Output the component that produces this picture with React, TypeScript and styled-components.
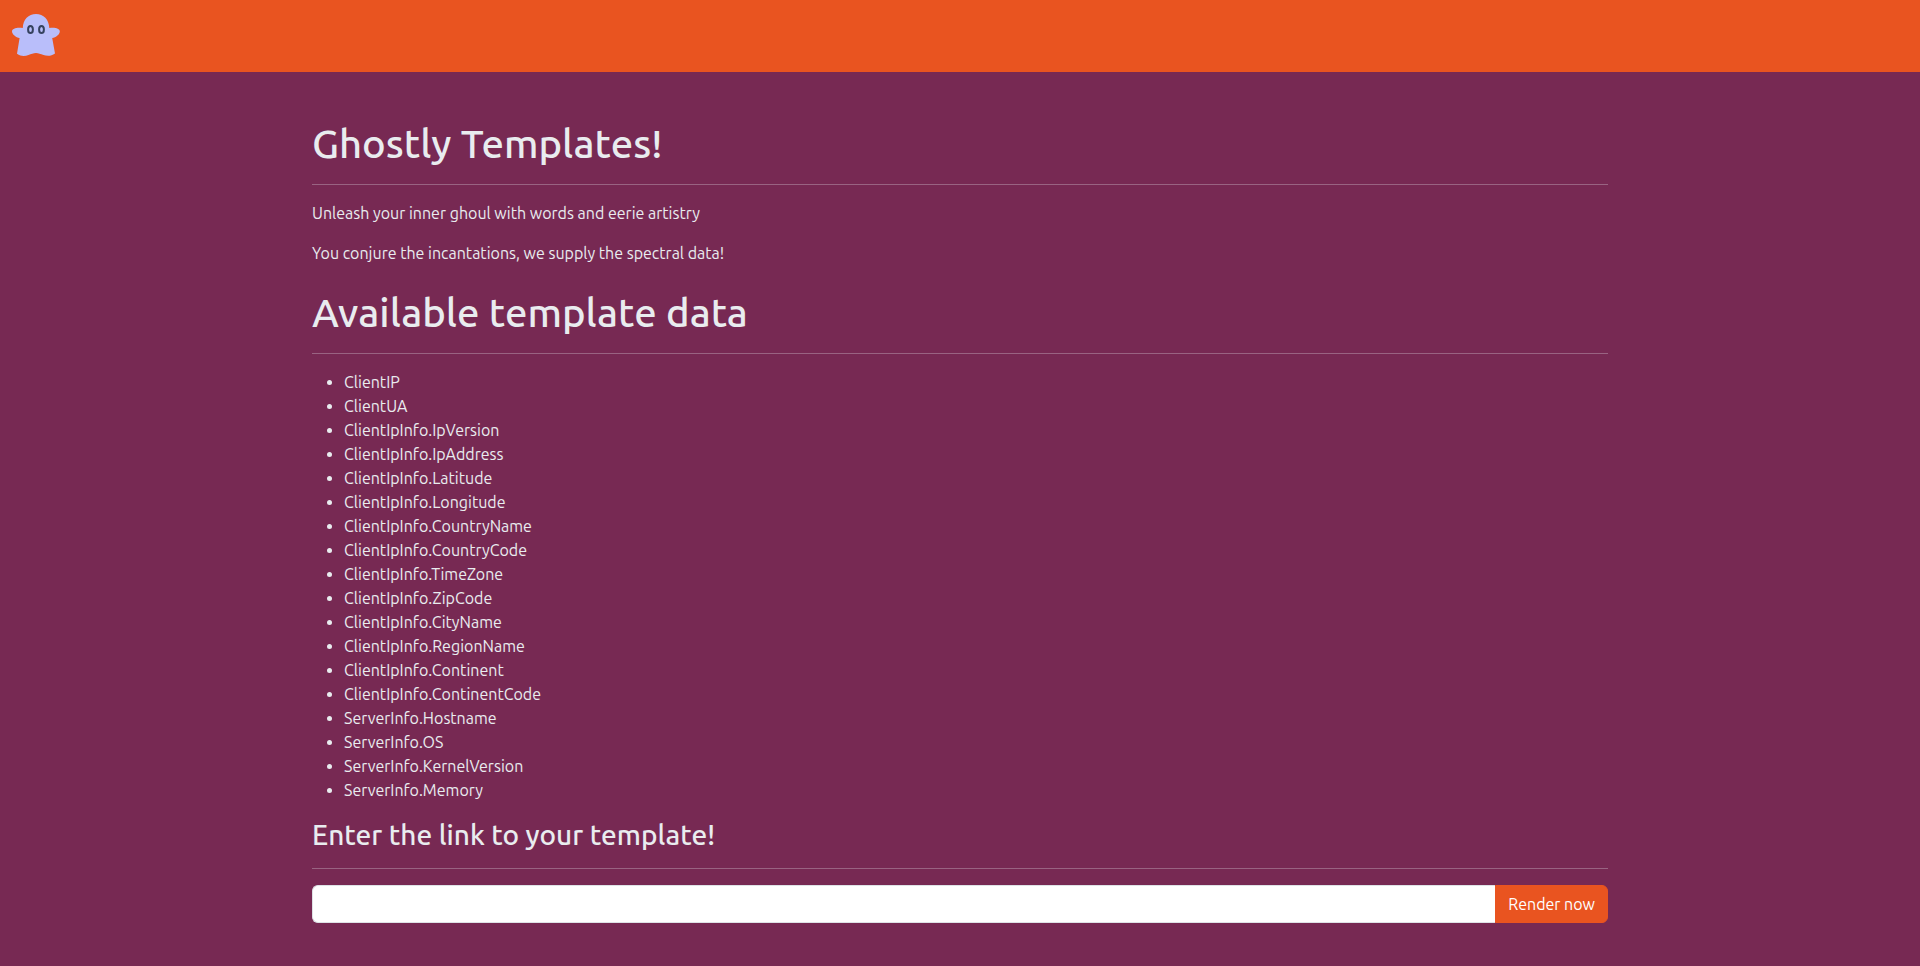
import React from 'react';
import styled, { createGlobalStyle } from 'styled-components';

const GlobalStyle = createGlobalStyle`
  *, *::before, *::after { box-sizing: border-box; }
  body {
    margin: 0;
    background: #772953;
    color: #e9ecef;
    font-family: Ubuntu, 'Noto Sans', sans-serif;
    font-size: 16px;
    font-weight: 400;
    line-height: 24px;
  }
`;

const Navbar = styled.nav`
  display: flex;
  align-items: center;
  padding: 12px;
  background: #e95420;
`;

const Brand = styled.a`
  display: block;
  width: 48px;
  height: 48px;
`;

const Container = styled.main`
  max-width: 1320px;
  margin: 0 auto;
  padding: 48px 12px;
`;

const Title = styled.h1`
  margin: 0;
  font-size: 40px;
  font-weight: 500;
  line-height: 48px;
`;

const DataTitle = styled(Title).attrs({ as: 'h2' })`
  margin-top: 24px;
`;

const FormTitle = styled.h3`
  margin: 0;
  font-size: 28px;
  font-weight: 500;
  line-height: 34px;
`;

const Rule = styled.hr`
  margin: 16px 0;
  border: 0;
  border-top: 1px solid #996382;
`;

const Text = styled.p`
  margin: 0 0 16px;
`;

const FieldList = styled.ul`
  margin: 0 0 16px;
  padding-left: 32px;
`;

const InputGroup = styled.form`
  display: flex;
  height: 38px;
`;

const LinkInput = styled.input`
  flex: 1;
  min-width: 0;
  padding: 6px 12px;
  border: 1px solid #dee2e6;
  border-right: 0;
  border-radius: 6px 0 0 6px;
  background: #fff;
  color: #212529;
  font: inherit;
`;

const RenderButton = styled.button`
  padding: 6px 12px;
  border: 1px solid #e95420;
  border-radius: 0 6px 6px 0;
  background: #e95420;
  color: #fff;
  font: inherit;
  cursor: pointer;
`;

const fields = [
  'ClientIP',
  'ClientUA',
  'ClientIpInfo.IpVersion',
  'ClientIpInfo.IpAddress',
  'ClientIpInfo.Latitude',
  'ClientIpInfo.Longitude',
  'ClientIpInfo.CountryName',
  'ClientIpInfo.CountryCode',
  'ClientIpInfo.TimeZone',
  'ClientIpInfo.ZipCode',
  'ClientIpInfo.CityName',
  'ClientIpInfo.RegionName',
  'ClientIpInfo.Continent',
  'ClientIpInfo.ContinentCode',
  'ServerInfo.Hostname',
  'ServerInfo.OS',
  'ServerInfo.KernelVersion',
  'ServerInfo.Memory',
];

const Ghost = () => (
  <svg width="48" height="48" viewBox="0 0 48 48" aria-hidden="true">
    <path
      fill="#b9befa"
      d="M10.800 16C11 7.500 16.500 2 24 2S37 7.500 37.300 16C42 15 47.800 16 47.800 19.300C47.800 22.500 44 25.500 40.200 26L43 41.500C39 44.600 34.500 44 31.500 43C28.500 42 26.500 41 24 41S19 42.200 16.500 43C13 44.200 9 44.600 5 41.800L7.600 26C4 25.500 0 22.500 0 19.300C0 16 6 15 10.800 16Z"
    />
    <g fill="none" stroke="#35425f" strokeWidth="2">
      <ellipse cx="18.500" cy="17.500" rx="2.400" ry="3.600" />
      <ellipse cx="29.500" cy="17.500" rx="2.400" ry="3.600" />
    </g>
  </svg>
);

export default function App() {
  return (
    <>
      <GlobalStyle />
      <Navbar>
        <Brand href="/" aria-label="Home">
          <Ghost />
        </Brand>
      </Navbar>
      <Container>
        <Title>Ghostly Templates!</Title>
        <Rule />
        <Text>Unleash your inner ghoul with words and eerie artistry</Text>
        <Text>You conjure the incantations, we supply the spectral data!</Text>
        <DataTitle>Available template data</DataTitle>
        <Rule />
        <FieldList>
          {fields.map((field) => (
            <li key={field}>{field}</li>
          ))}
        </FieldList>
        <FormTitle id="link-title">Enter the link to your template!</FormTitle>
        <Rule />
        <InputGroup onSubmit={(event) => event.preventDefault()}>
          <LinkInput type="text" name="page" aria-labelledby="link-title" />
          <RenderButton type="submit">Render now</RenderButton>
        </InputGroup>
      </Container>
    </>
  );
}
